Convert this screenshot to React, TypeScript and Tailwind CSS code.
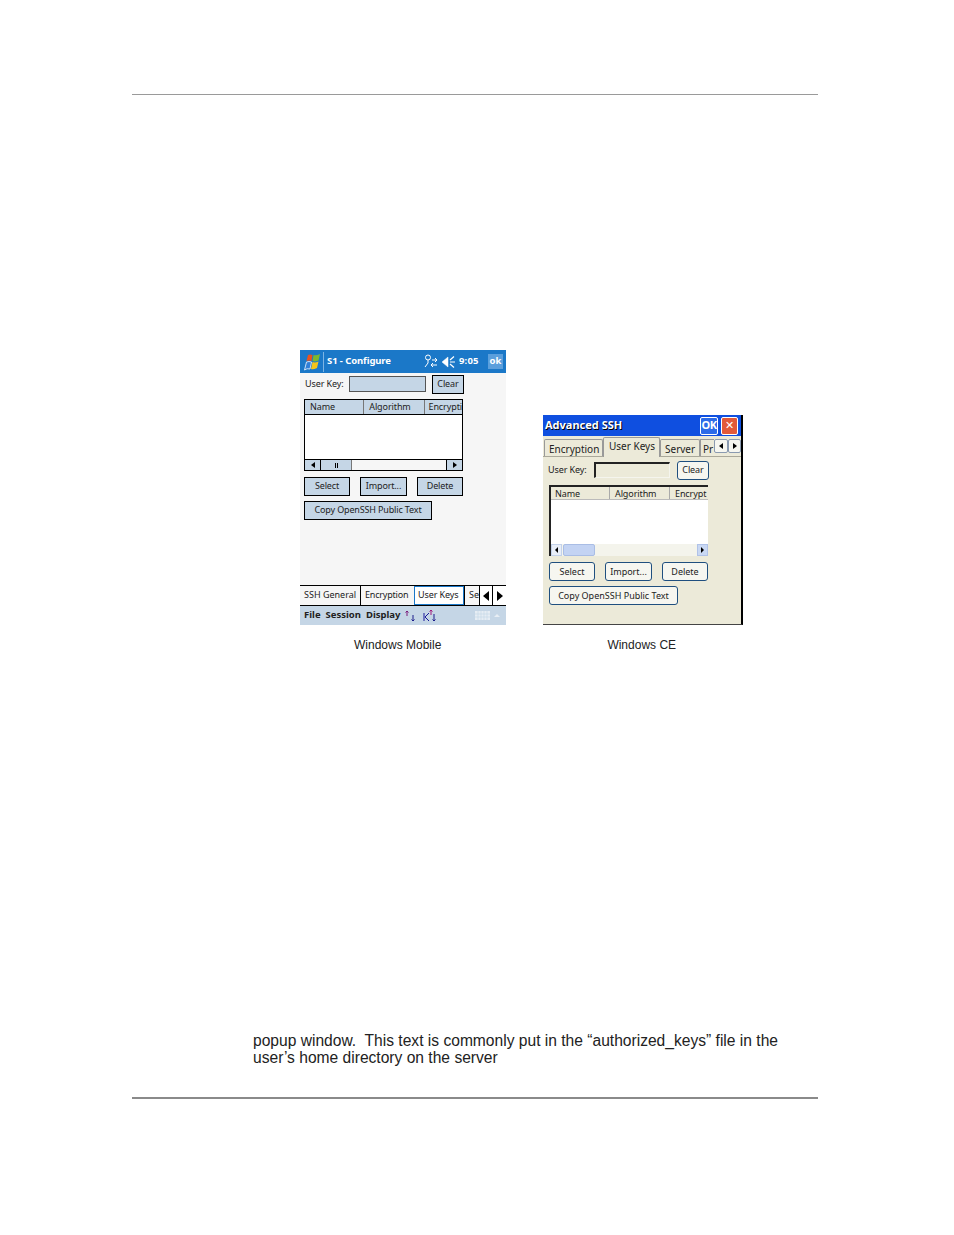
const ui = { fontFamily: '"Noto Sans", sans-serif' };

function WMButton({ w, children }: { w: string; children: string }) {
  return (
    <div className={`${w} h-[19px] pb-[2px] flex items-center justify-center bg-[#c5d6e6] border border-black text-[9px] tracking-[-0.15px] text-[#222]`}>
      {children}
    </div>
  );
}

function CEButton({ w, children }: { w: string; children: string }) {
  return (
    <div className={`${w} h-[19px] pt-[1px] flex items-center justify-center rounded-[3px] bg-[#f6f6f0] border border-[#1f4f7f] text-[9px] text-[#222]`}>
      {children}
    </div>
  );
}

function Flag() {
  return (
    <svg width="18" height="18" viewBox="0 0 18 18">
      <path d="M5 2 Q7 1 9.5 2 L8.5 8 Q6 7 3.5 8 Z" fill="#e8531f" />
      <path d="M10.5 2 Q13 3 17 1 L15.5 7.5 Q12 9 9.5 8 Z" fill="#7cb82f" />
      <path d="M3.5 9 Q6 8 8.5 9 L7 16 Q4 15 1.5 17 Z" fill="#2f7fd8" stroke="#f2f6fb" strokeWidth="0.8" />
      <path d="M9.5 9 Q12 10 15.5 8.5 L14 15 Q10 17 8 16 Z" fill="#f5c518" />
    </svg>
  );
}

function WindowsMobile() {
  return (
    <div className="w-[206px] h-[275px] bg-[#f6f6f6] flex flex-col text-[#222]" style={ui}>
      <div className="h-[23px] bg-[#1b78c8] flex items-center text-white pl-[3px] pr-[3px] text-[9.5px] font-bold">
        <Flag />
        <div className="w-px h-[20px] bg-[#7db4e4] ml-[2px] mr-[3px]" />
        <span className="tracking-[-0.1px]">S1 - Configure</span>
        <svg className="ml-[32px]" width="15" height="15" viewBox="0 0 15 15" fill="none" stroke="white" strokeWidth="1">
          <circle cx="5" cy="3.5" r="2.5" />
          <path d="M5 6v3M2 13l3-4M9 6h5M12 4l2 2-2 2M14 11H8M10 9l-2 2 2 2" />
        </svg>
        <svg className="ml-[3px]" width="15" height="14" viewBox="0 0 15 14" fill="white" stroke="white">
          <path d="M1 7l6-5v10z" strokeWidth="0.5" />
          <path d="M9 7h5M9 5l4-3.5M9 9l4 3.5" strokeWidth="1.2" fill="none" />
        </svg>
        <span className="ml-[3px] tracking-[0.2px]">9:05</span>
        <div className="ml-auto w-[15px] h-[15px] bg-[#5b9fdc] flex items-center justify-center">ok</div>
      </div>

      <div className="flex items-center h-[20px] mt-[1px] pl-[5px] text-[9px] tracking-[-0.1px]">
        <span className="w-[44px]">User Key:</span>
        <div className="w-[77px] h-[16px] bg-[#c5d6e6] border border-[#555]" />
        <div className="w-[32px] h-[19px] ml-[6px] bg-[#c5d6e6] border border-black flex items-center justify-center">Clear</div>
      </div>

      <div className="ml-[4px] mt-[5px] w-[159px] h-[72px] border border-black bg-white flex flex-col text-[9px] tracking-[-0.1px]">
        <div className="h-[15px] flex bg-[#c5d6e6] border-b border-black overflow-hidden">
          <div className="w-[60px] pl-[5px] border-r border-[#777] leading-[13px]">Name</div>
          <div className="w-[61px] pl-[5px] border-r border-[#777] leading-[13px]">Algorithm</div>
          <div className="flex-1 pl-[4px] leading-[13px] whitespace-nowrap">Encrypti</div>
        </div>
        <div className="flex-1" />
        <div className="h-[11px] flex border-t border-black bg-[#f6f6f6]">
          <div className="w-[16px] bg-[#c5d6e6] border-r border-black flex items-center justify-center">
            <div className="border-y-[3px] border-y-transparent border-r-[4px] border-r-black" />
          </div>
          <div className="w-[31px] bg-[#c5d6e6] border-r border-[#777] flex items-center justify-center gap-[1px]">
            <div className="w-px h-[5px] bg-black" />
            <div className="w-px h-[5px] bg-black" />
          </div>
          <div className="flex-1" />
          <div className="w-[16px] bg-[#c5d6e6] border-l border-black flex items-center justify-center">
            <div className="border-y-[3px] border-y-transparent border-l-[4px] border-l-black" />
          </div>
        </div>
      </div>

      <div className="flex ml-[4px] mt-[6px] gap-[10px]">
        <WMButton w="w-[46px]">Select</WMButton>
        <WMButton w="w-[47px]">Import...</WMButton>
        <WMButton w="w-[46px]">Delete</WMButton>
      </div>
      <div className="ml-[4px] mt-[5px]">
        <WMButton w="w-[128px]">Copy OpenSSH Public Text</WMButton>
      </div>

      <div className="mt-auto h-[20px] flex border-t border-black text-[9px] bg-[#f6f6f6] overflow-hidden">
        <div className="w-[61px] pl-[4px] border-r border-black leading-[18px] whitespace-nowrap">SSH General</div>
        <div className="w-[53px] pl-[4px] leading-[18px] whitespace-nowrap tracking-[-0.2px]">Encryption</div>
        <div className="w-[50px] bg-white border border-[#1b78c8] pl-[3px] leading-[16px] whitespace-nowrap tracking-[-0.1px]">User Keys</div>
        <div className="w-[15px] pl-[4px] leading-[18px] overflow-hidden border-l border-black">Se</div>
        <div className="w-[14px] bg-white border-x border-black flex items-center justify-center">
          <div className="border-y-[5px] border-y-transparent border-r-[6px] border-r-black" />
        </div>
        <div className="flex-1 bg-white flex items-center justify-center">
          <div className="border-y-[5px] border-y-transparent border-l-[6px] border-l-black" />
        </div>
      </div>
      <div className="h-[20px] bg-[#c5d6e6] border-t border-black flex items-center pl-[4px] pr-[6px] text-[9.5px] font-bold gap-[5px]">
        <span>File</span>
        <span>Session</span>
        <span>Display</span>
        <svg width="12" height="12" viewBox="0 0 12 12" fill="none" stroke="#7a1a7a" strokeWidth="1">
          <path d="M2 6V1M0.5 2.5L2 1l1.5 1.5" />
          <path d="M8 5v6M6.5 9.5L8 11l1.5-1.5" stroke="#1a1a8a" />
        </svg>
        <svg className="ml-[1px]" width="14" height="13" viewBox="0 0 14 13" fill="none" strokeWidth="1">
          <path d="M1 4v8M6 4L2 8l4 4" stroke="#1a1a9a" />
          <path d="M8 6V1M6.5 2.5L8 1l1.5 1.5" stroke="#a01a7a" />
          <path d="M11 5v7M9.5 10.5L11 12l1.5-1.5" stroke="#1a1a8a" />
        </svg>
        <svg className="ml-auto" width="15" height="9" viewBox="0 0 15 9" fill="#e6edf4" stroke="#c5d6e6" strokeWidth="0.6">
          <rect x="0" y="0" width="15" height="9" stroke="none" />
          <path d="M0 3h15M0 6h15M3 0v9M6 0v9M9 0v9M12 0v9" />
        </svg>
        <div className="border-x-[3px] border-x-transparent border-b-[3px] border-b-[#e8eef4] ml-[-1px]" />
      </div>
    </div>
  );
}

function WindowsCE() {
  return (
    <div className="w-[200px] h-[210px] bg-[#ecead9] border-r-2 border-b border-r-black border-b-[#444] flex flex-col text-[#222]" style={ui}>
      <div className="h-[21px] bg-[#0f4fe0] flex items-center pl-[2px] pr-[3px] text-white text-[11px] font-bold">
        <span className="whitespace-nowrap [text-shadow:1px_1px_0_#000]">Advanced SSH</span>
        <div className="ml-auto w-[18px] h-[18px] bg-[#2d6be8] border border-white rounded-[2px] flex items-center justify-center text-[11px] tracking-[-0.5px]">OK</div>
        <div className="ml-[3px] w-[17px] h-[18px] bg-[#e2593a] border border-white rounded-[2px] flex items-center justify-center text-[11px] font-normal">✕</div>
      </div>

      <div className="h-[21px] flex items-end pl-[1px] border-b border-[#aaa89a] text-[10px] relative">
        <div className="w-[59px] h-[17px] border border-b-0 border-[#999] rounded-t-[2px] pl-[4px] leading-[18px]">Encryption</div>
        <div className="w-[57px] h-[20px] mb-[-1px] bg-[#ecead9] border border-b-0 border-[#999] rounded-t-[2px] pl-[5px] leading-[17px]">User Keys</div>
        <div className="w-[40px] h-[17px] border border-b-0 border-[#999] rounded-t-[2px] pl-[4px] leading-[18px]">Server</div>
        <div className="w-[14px] h-[17px] border-l border-t border-[#999] pl-[2px] leading-[18px] overflow-hidden">Pr</div>
        <div className="absolute right-[13px] top-[3px] w-[14px] h-[14px] bg-[#f6f6f0] border border-[#8a9ab0] rounded-[2px] flex items-center justify-center">
          <div className="border-y-[3px] border-y-transparent border-r-[4px] border-r-black" />
        </div>
        <div className="absolute right-0 top-[3px] w-[13px] h-[14px] bg-[#f6f6f0] border border-[#8a9ab0] rounded-[2px] flex items-center justify-center">
          <div className="border-y-[3px] border-y-transparent border-l-[4px] border-l-black" />
        </div>
      </div>

      <div className="flex items-center mt-[3px] h-[20px] pl-[5px] text-[9px] tracking-[-0.1px]">
        <span className="w-[46px] whitespace-nowrap">User Key:</span>
        <div className="w-[76px] h-[16px] bg-[#ecead9] border-l-2 border-t-2 border-l-[#222] border-t-[#222] border-b border-r border-b-[#f5f5ee] border-r-[#f5f5ee]" />
        <div className="ml-[7px] w-[32px] h-[19px] bg-[#f6f6f0] border border-[#1f4f7f] rounded-[3px] flex items-center justify-center">Clear</div>
      </div>

      <div className="ml-[6px] mt-[5px] w-[159px] h-[71px] bg-white border-l-2 border-t-2 border-[#222] flex flex-col text-[9px] tracking-[-0.1px]">
        <div className="h-[13px] flex bg-[#ecead9] border-b border-[#bbb] overflow-hidden">
          <div className="w-[59px] pl-[4px] border-r border-[#aaa] leading-[14px]">Name</div>
          <div className="w-[60px] pl-[5px] border-r border-[#aaa] leading-[14px]">Algorithm</div>
          <div className="flex-1 pl-[5px] leading-[14px] whitespace-nowrap overflow-hidden">Encrypt</div>
        </div>
        <div className="flex-1" />
        <div className="h-[12px] flex bg-[#f4f4ec]">
          <div className="w-[11px] bg-[#e8eef8] flex items-center justify-center border border-[#c4d2ea]">
            <div className="border-y-[3px] border-y-transparent border-r-[3px] border-r-black" />
          </div>
          <div className="w-[32px] ml-[1px] bg-[#c3d3f3] border border-[#a9bde5] rounded-[2px]" />
          <div className="flex-1" />
          <div className="w-[11px] bg-[#c9d8f3] flex items-center justify-center border border-[#b0c2e8]">
            <div className="border-y-[3px] border-y-transparent border-l-[3px] border-l-black" />
          </div>
        </div>
      </div>

      <div className="flex ml-[6px] mt-[6px] gap-[10px]">
        <CEButton w="w-[46px]">Select</CEButton>
        <CEButton w="w-[47px]">Import...</CEButton>
        <CEButton w="w-[46px]">Delete</CEButton>
      </div>
      <div className="ml-[6px] mt-[5px]">
        <CEButton w="w-[129px]">Copy OpenSSH Public Text</CEButton>
      </div>
    </div>
  );
}

export default function App() {
  return (
    <div className="w-[954px] h-[1235px] bg-white pt-[94px] px-[132px] overflow-hidden" style={{ fontFamily: '"Liberation Sans", Arial, sans-serif' }}>
      <div className="w-[686px] h-px bg-[#9a9a9a]" />

      <div className="ml-[168px] mt-[255px] flex items-end">
        <WindowsMobile />
        <div className="ml-[37px]">
          <WindowsCE />
        </div>
      </div>

      <div className="flex mt-[13px] text-[12px] leading-[14px] text-[#222]">
        <div className="ml-[222px]">Windows Mobile</div>
        <div className="ml-[166px]">Windows CE</div>
      </div>

      <div className="ml-[121px] mt-[380px] text-[15.6px] leading-[17px] text-[#222] whitespace-pre">
        <div>popup window.  This text is commonly put in the “authorized_keys” file in the</div>
        <div>user’s home directory on the server</div>
      </div>

      <div className="w-[686px] h-[2px] bg-[#8a8a8a] mt-[31px]" />
    </div>
  );
}
